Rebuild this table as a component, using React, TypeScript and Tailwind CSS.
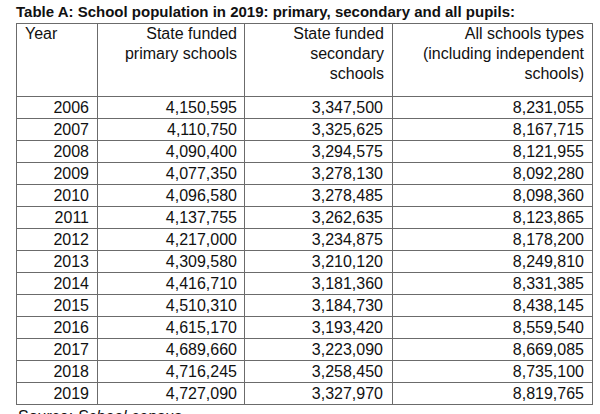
const ROWS: [string, string, string, string][] = [
  ['2006', '4,150,595', '3,347,500', '8,231,055'],
  ['2007', '4,110,750', '3,325,625', '8,167,715'],
  ['2008', '4,090,400', '3,294,575', '8,121,955'],
  ['2009', '4,077,350', '3,278,130', '8,092,280'],
  ['2010', '4,096,580', '3,278,485', '8,098,360'],
  ['2011', '4,137,755', '3,262,635', '8,123,865'],
  ['2012', '4,217,000', '3,234,875', '8,178,200'],
  ['2013', '4,309,580', '3,210,120', '8,249,810'],
  ['2014', '4,416,710', '3,181,360', '8,331,385'],
  ['2015', '4,510,310', '3,184,730', '8,438,145'],
  ['2016', '4,615,170', '3,193,420', '8,559,540'],
  ['2017', '4,689,660', '3,223,090', '8,669,085'],
  ['2018', '4,716,245', '3,258,450', '8,735,100'],
  ['2019', '4,727,090', '3,327,970', '8,819,765'],
];

export default function App() {
  return (
    <div className="w-[600px] h-[414px] overflow-hidden bg-white text-[#111] font-['Liberation_Sans',Arial,sans-serif]">
      <div className="pl-[16px] pt-[3px]">
        <h1 className="text-[15px] leading-[18px] font-bold">
          Table A: School population in 2019: primary, secondary and all pupils:
        </h1>
        <table className="mt-[2px] border-collapse text-[16px] leading-[20px] table-fixed w-[576px]">
          <colgroup>
            <col className="w-[81px]" />
            <col className="w-[147px]" />
            <col className="w-[148px]" />
            <col className="w-[200px]" />
          </colgroup>
          <thead>
            <tr className="h-[73px] align-top">
              <th className="border border-[#6b6b6b] font-normal text-left pl-[8px]">Year</th>
              <th className="border border-[#6b6b6b] font-normal text-right pr-[7px]">
                State funded
                <br />
                primary schools
              </th>
              <th className="border border-[#6b6b6b] font-normal text-right pr-[8px]">
                State funded
                <br />
                secondary
                <br />
                schools
              </th>
              <th className="border border-[#6b6b6b] font-normal text-right pr-[8px]">
                All schools types
                <br />
                (including independent
                <br />
                schools)
              </th>
            </tr>
          </thead>
          <tbody>
            {ROWS.map((r) => (
              <tr key={r[0]} className="h-[22px]">
                <td className="border border-[#6b6b6b] text-right pr-[8px] py-0">{r[0]}</td>
                <td className="border border-[#6b6b6b] text-right pr-[7px] py-0">{r[1]}</td>
                <td className="border border-[#6b6b6b] text-right pr-[9px] py-0">{r[2]}</td>
                <td className="border border-[#6b6b6b] text-right pr-[8px] py-0">{r[3]}</td>
              </tr>
            ))}
          </tbody>
        </table>
        <p className="text-[16px] leading-[20px] pl-[2px] mt-[2px]">
          Source: <span className="italic">School census</span>
        </p>
      </div>
    </div>
  );
}
